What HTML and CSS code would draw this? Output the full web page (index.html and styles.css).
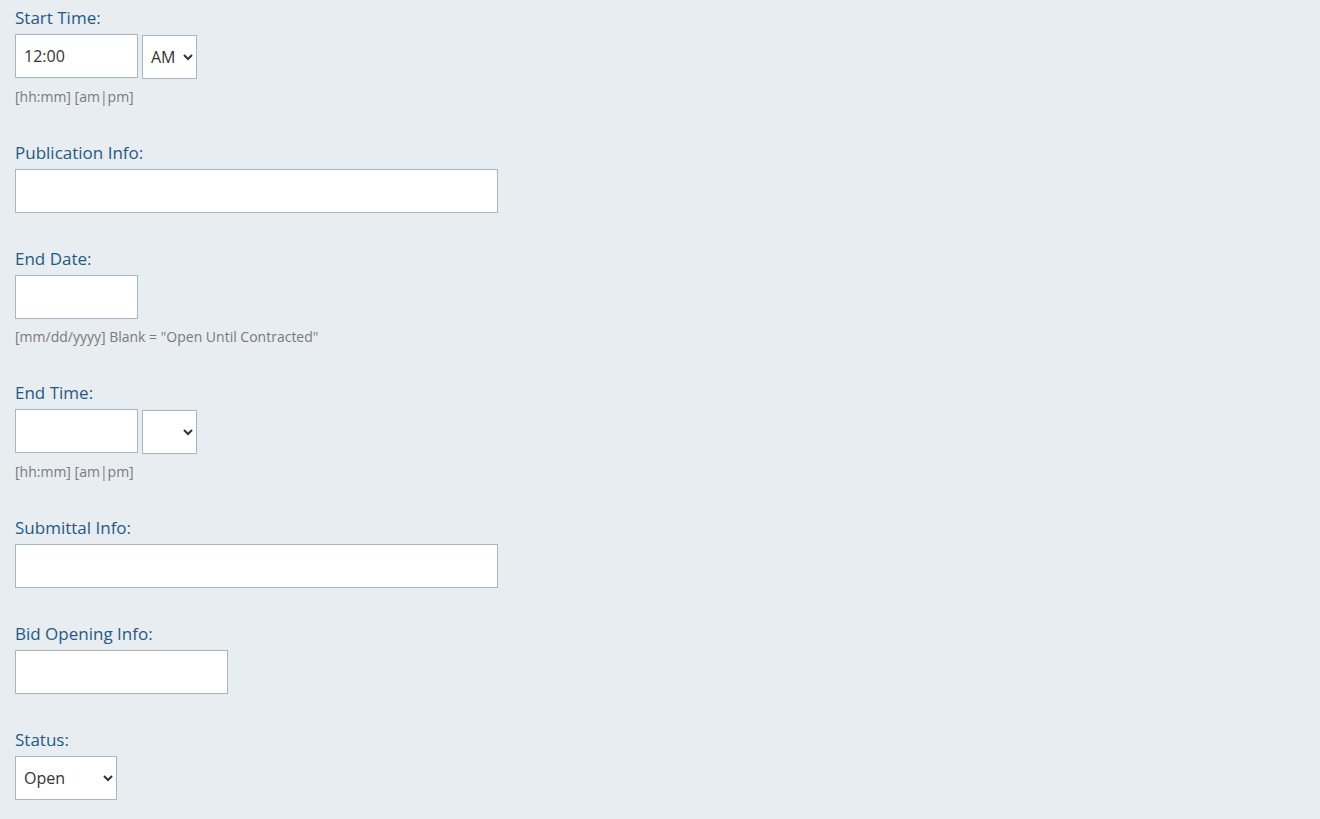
FILE: index.html
```html
<!DOCTYPE html>
<html>
<head>
<meta charset="utf-8">
<link rel="stylesheet" href="styles.css">
</head>
<body>
<form class="form">
  <div class="field">
    <label class="label">Start Time:</label>
    <div class="row">
      <input class="input input-short" type="text" value="12:00">
      <select class="select select-ampm"><option>AM</option><option>PM</option></select>
    </div>
    <div class="help">[hh:mm] [am|pm]</div>
  </div>
  <div class="field">
    <label class="label">Publication Info:</label>
    <div class="row"><input class="input input-long" type="text"></div>
  </div>
  <div class="field">
    <label class="label">End Date:</label>
    <div class="row"><input class="input input-short" type="text"></div>
    <div class="help">[mm/dd/yyyy] Blank = "Open Until Contracted"</div>
  </div>
  <div class="field">
    <label class="label">End Time:</label>
    <div class="row">
      <input class="input input-short" type="text">
      <select class="select select-ampm"><option></option><option>AM</option><option>PM</option></select>
    </div>
    <div class="help">[hh:mm] [am|pm]</div>
  </div>
  <div class="field">
    <label class="label">Submittal Info:</label>
    <div class="row"><input class="input input-long" type="text"></div>
  </div>
  <div class="field">
    <label class="label">Bid Opening Info:</label>
    <div class="row"><input class="input input-medium" type="text"></div>
  </div>
  <div class="field">
    <label class="label">Status:</label>
    <div class="row">
      <select class="select select-status"><option>Open</option><option>Closed</option></select>
    </div>
  </div>
</form>
</body>
</html>
```

FILE: styles.css
```css
html, body {
  margin: 0;
  padding: 0;
  background: #e8edf2;
}
body {
  font-family: "Open Sans", "Liberation Sans", sans-serif;
}
.form {
  padding: 6px 15px 0;
}
.field {
  margin-bottom: 34px;
}
.label {
  display: block;
  font-size: 17px;
  line-height: 24px;
  color: #1f5a85;
  margin-bottom: 4px;
}
.row {
  display: flex;
  align-items: flex-start;
  gap: 4px;
}
.input {
  box-sizing: border-box;
  height: 44px;
  border: 1px solid #a7b5c4;
  background: #fff;
  padding: 0 8px;
  font-family: inherit;
  font-size: 16px;
  color: #333;
  border-radius: 0;
  outline: none;
}
.input-short { width: 123px; }
.input-long { width: 483px; }
.input-medium { width: 213px; }
.select {
  box-sizing: border-box;
  height: 44px;
  margin-top: 1px;
  border: 1px solid #a7b5c4;
  background: #fff;
  padding: 0 4px 0 4px;
  font-family: inherit;
  font-size: 16px;
  color: #333;
  border-radius: 0;
}
.select-ampm { width: 55px; }
.select-status { width: 102px; margin-top: 0; }
.help {
  margin-top: 8px;
  font-size: 14px;
  line-height: 20px;
  color: #7a7a7a;
}
```
